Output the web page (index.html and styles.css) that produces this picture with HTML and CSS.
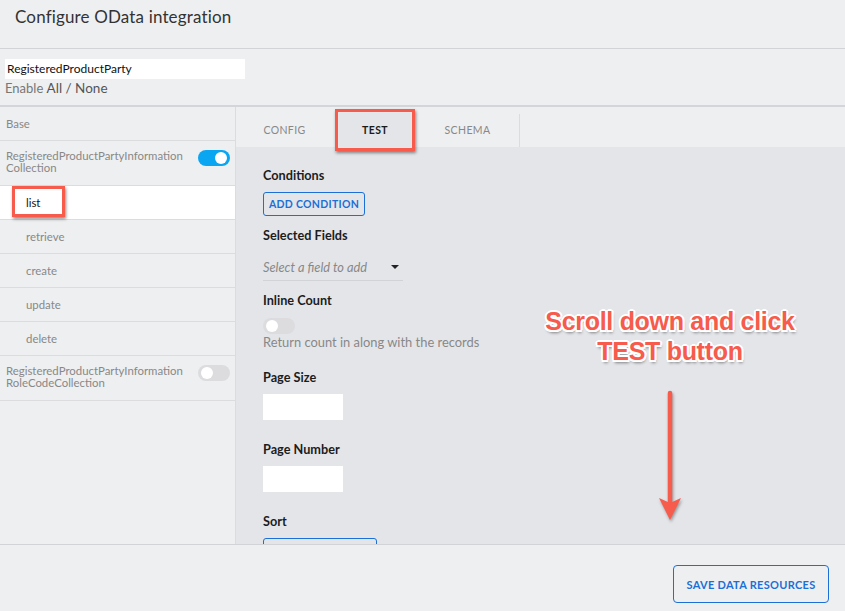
FILE: index.html
```html
<!DOCTYPE html>
<html>
<head>
<meta charset="utf-8">
<link rel="stylesheet" href="styles.css">
</head>
<body>
<div class="page">
  <header class="header"><h1 class="title">Configure OData integration</h1></header>
  <section class="top">
    <div class="name-input">RegisteredProductParty</div>
    <div class="enable"><span class="enable-label">Enable</span> <span class="enable-links">All / None</span></div>
  </section>
  <main class="main">
    <aside class="sidebar">
      <div class="row row-base">Base</div>
      <div class="row row-coll">
        <span class="coll-name">RegisteredProductPartyInformation<br>Collection</span>
        <span class="toggle toggle-on"><span class="knob"></span></span>
      </div>
      <div class="row row-sub row-active"><span class="sub-active">list</span><span class="hl-box hl-list"></span></div>
      <div class="row row-sub">retrieve</div>
      <div class="row row-sub">create</div>
      <div class="row row-sub">update</div>
      <div class="row row-sub">delete</div>
      <div class="row row-coll">
        <span class="coll-name">RegisteredProductPartyInformation<br>RoleCodeCollection</span>
        <span class="toggle toggle-off"><span class="knob"></span></span>
      </div>
    </aside>
    <section class="panel">
      <nav class="tabs">
        <div class="tab-group">
          <span class="tab tab-config">CONFIG</span>
          <span class="tab tab-test tab-active">TEST<span class="hl-box hl-tab"></span></span>
          <span class="tab tab-schema">SCHEMA</span>
        </div>
      </nav>
      <div class="content">
        <div class="label">Conditions</div>
        <button class="btn btn-small">ADD CONDITION</button>
        <div class="label label-gap">Selected Fields</div>
        <div class="select"><span class="placeholder">Select a field to add</span><span class="caret"></span></div>
        <div class="label label-gap">Inline Count</div>
        <span class="toggle toggle-off toggle-inline"><span class="knob"></span></span>
        <div class="hint">Return count in along with the records</div>
        <div class="label label-gap2">Page Size</div>
        <div class="field"></div>
        <div class="label label-gap3">Page Number</div>
        <div class="field"></div>
        <div class="label label-gap3">Sort</div>
        <div class="sort-btn"></div>

        <div class="annotation">
          <div class="note">Scroll down and click<br>TEST button</div>
          <svg class="arrow" width="30" height="134" viewBox="0 0 30 134">
            <line x1="15" y1="3" x2="15" y2="114" stroke="#f65b4c" stroke-width="4.5" stroke-linecap="round"/>
            <polygon points="4,108 15,113 26,108 15,130" fill="#f65b4c"/>
          </svg>
        </div>
      </div>
    </section>
  </main>
  <footer class="footer">
    <button class="btn btn-save">SAVE DATA RESOURCES</button>
  </footer>
</div>
</body>
</html>
```

FILE: styles.css
```css
* { box-sizing: border-box; }
html, body { margin: 0; padding: 0; }
body {
  font-family: "Lato", "Open Sans", "Liberation Sans", sans-serif;
  background: #eeeff1;
  color: #222;
  width: 845px;
  height: 611px;
  overflow: hidden;
}
.page { display: flex; flex-direction: column; height: 611px; }

.header {
  height: 49px;
  flex-shrink: 0;
  border-bottom: 1px solid #d2d3d6;
  padding-left: 15px;
  display: flex;
  align-items: flex-start;
}
.title {
  margin: 6px 0 0 0;
  font-size: 17px;
  font-weight: 400;
  color: #333;
  letter-spacing: 0.15px;
}

.top {
  height: 58px;
  flex-shrink: 0;
  padding: 10px 0 0 5px;
  border-bottom: 2px solid #d4d5d8;
}
.name-input {
  width: 240px;
  height: 20px;
  background: #fff;
  font-size: 12px;
  line-height: 20px;
  padding-left: 2px;
  color: #111;
}
.enable { font-size: 13px; line-height: 18px; }
.enable-label { color: #777; }
.enable-links { color: #555; font-size: 13.5px; }

.main { flex: 1; display: flex; min-height: 0; }

.sidebar {
  width: 236px;
  flex-shrink: 0;
  border-right: 1px solid #dcdcdf;
  display: flex;
  flex-direction: column;
}
.row {
  flex-shrink: 0;
  border-bottom: 1px solid #dcdcdf;
  font-size: 11.4px;
  color: #888;
  padding-left: 6px;
  display: flex;
  align-items: center;
  position: relative;
}
.row-base { height: 34px; }
.row-coll { height: 45px; justify-content: space-between; padding-right: 5px; line-height: 12px; }
.row-coll .coll-name { padding-bottom: 2px; }
.row-sub { height: 34px; padding-left: 26px; }
.row-active { background: #fff; }
.sub-active { color: #111; }

.toggle {
  display: inline-block;
  width: 32px;
  height: 16px;
  border-radius: 8px;
  position: relative;
  flex-shrink: 0;
}
.toggle .knob {
  position: absolute;
  top: 2px;
  width: 12px;
  height: 12px;
  border-radius: 50%;
  background: #fff;
}
.toggle-on { background: #0aa6f2; margin-top: -11px; }
.toggle-on .knob { right: 3px; }
.toggle-off { background: #dcdcdf; }
.toggle-off .knob { left: 3px; }
.row-coll .toggle-off { margin-top: -11px; }

.hl-box {
  position: absolute;
  border: 3px solid #f65b4c;
  box-shadow: 1px 2px 3px rgba(0,0,0,0.45);
  z-index: 3;
}
.hl-list { left: 12px; top: 0px; width: 53px; height: 31px; }

.panel { flex: 1; display: flex; flex-direction: column; min-width: 0; }
.tabs { height: 40px; flex-shrink: 0; display: flex; position: relative; z-index: 2; }
.tab-group {
  display: flex;
  padding: 0 3px 0 2px;
  gap: 6px;
  border-right: 1px solid #dcdcdf;
  margin-top: 7px;
}
.tab {
  font-size: 10.5px;
  letter-spacing: 0.4px;
  color: #888;
  display: flex;
  align-items: center;
  justify-content: center;
  position: relative;
  margin-top: -2px;
}
.tab-config { width: 93px; }
.tab-test { width: 76px; }
.tab-schema { width: 97px; }
.tab-active { background: #e4e5e8; color: #1a1a1a; font-weight: 700; }
.hl-tab { left: -2px; top: -3px; right: -2px; bottom: -4px; }

.content {
  flex: 1;
  background: #e4e5e9;
  padding: 20px 0 0 27px;
  position: relative;
  z-index: 1;
  overflow: hidden;
  display: flex;
  flex-direction: column;
  align-items: flex-start;
}
.content > * { flex-shrink: 0; }
.label { font-size: 12.7px; font-weight: 700; line-height: 16px; color: #1c1c1c; }
.label-gap { margin-top: 11px; }
.label-gap2 { margin-top: 19px; }
.label-gap3 { margin-top: 21px; }
.btn {
  font-family: inherit;
  background: transparent;
  border: 1px solid #1b6fd6;
  color: #1b6fd6;
  font-weight: 700;
  letter-spacing: 0.3px;
  cursor: pointer;
}
.btn-small {
  margin-top: 9px;
  height: 24px;
  width: 102px;
  font-size: 10.5px;
  border-radius: 3px;
  padding: 0;
}
.select {
  margin-top: 10px;
  width: 140px;
  height: 28px;
  border-bottom: 1px solid #d2d3d6;
  display: flex;
  align-items: center;
  justify-content: space-between;
  padding-right: 4px;
}
.placeholder { font-size: 12.8px; font-style: italic; color: #888; }
.caret {
  width: 0; height: 0;
  border-left: 4px solid transparent;
  border-right: 4px solid transparent;
  border-top: 4px solid #222;
}
.toggle-inline { margin-top: 10px; }
.hint { font-size: 12.9px; color: #888; line-height: 16px; }
.field { margin-top: 9px; width: 80px; height: 26px; background: #fff; }
.sort-btn {
  margin-top: 9px;
  width: 114px;
  height: 24px;
  border: 1px solid #1b6fd6;
  border-radius: 3px;
}

.annotation {
  position: absolute;
  left: 279px;
  top: 159px;
  width: 310px;
  display: flex;
  flex-direction: column;
  align-items: center;
}
.note {
  font-family: "Liberation Sans", Arial, sans-serif;
  font-weight: 700;
  font-size: 25px;
  line-height: 30px;
  color: #f65b4c;
  text-align: center;
  letter-spacing: -0.3px;
  white-space: nowrap;
  text-shadow:
    -1.5px -1.5px 0 #fff, 1.5px -1.5px 0 #fff, -1.5px 1.5px 0 #fff, 1.5px 1.5px 0 #fff,
    0 -2px 0 #fff, 0 2px 0 #fff, -2px 0 0 #fff, 2px 0 0 #fff,
    1px 3px 3px rgba(0,0,0,0.45);
}
.arrow { margin-top: 24px; filter: drop-shadow(1px 2px 1.5px rgba(0,0,0,0.35)); }

.footer {
  height: 67px;
  flex-shrink: 0;
  border-top: 1px solid #d2d3d6;
  display: flex;
  justify-content: flex-end;
  align-items: flex-start;
  padding: 20px 16px 0 0;
}
.btn-save {
  width: 156px;
  height: 38px;
  border-radius: 4px;
  font-size: 11px;
  padding: 0;
}
```
